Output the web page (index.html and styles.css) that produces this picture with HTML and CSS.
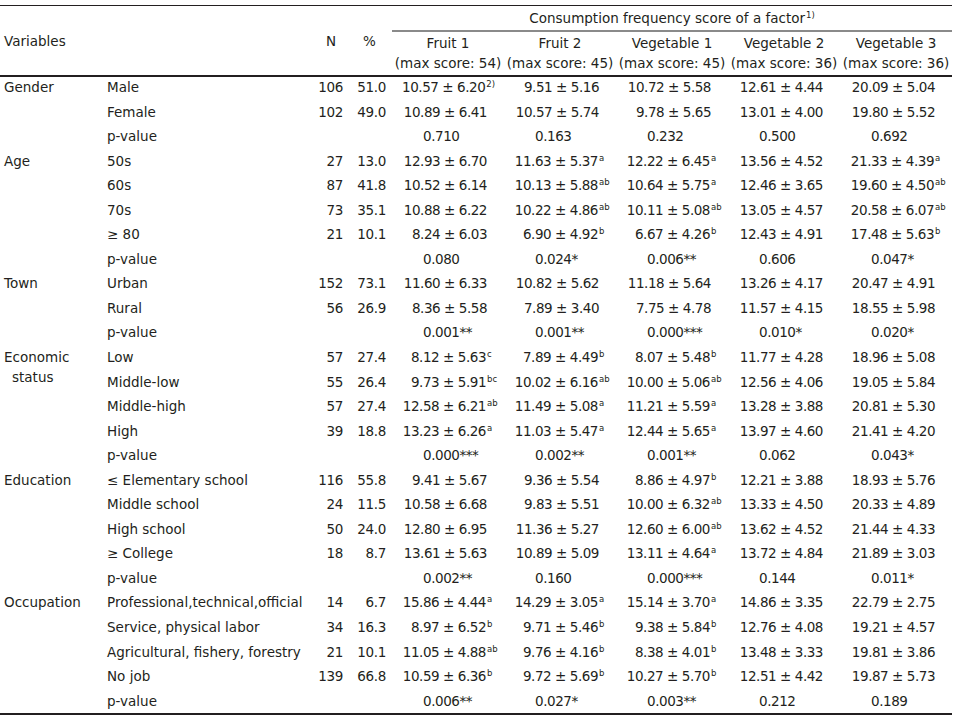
FILE: index.html
```html
<!DOCTYPE html>
<html>
<head>
<meta charset="utf-8">
<link rel="stylesheet" href="styles.css">
</head>
<body>
<table class="t">
<colgroup>
<col class="c-var"><col class="c-sub"><col class="c-n"><col class="c-pct"><col class="c-d"><col class="c-d"><col class="c-d"><col class="c-d"><col class="c-d">
</colgroup>
<thead>
<tr>
<th class="h-var" rowspan="2" colspan="2">Variables</th>
<th class="h-n" rowspan="2">N</th>
<th class="h-pct" rowspan="2">%</th>
<th class="h-top" colspan="5">Consumption frequency score of a factor<span class="hs">1)</span></th>
</tr>
<tr>
<th class="h-col">Fruit 1<br>(max score: 54)</th>
<th class="h-col">Fruit 2<br>(max score: 45)</th>
<th class="h-col">Vegetable 1<br>(max score: 45)</th>
<th class="h-col">Vegetable 2<br>(max score: 36)</th>
<th class="h-col">Vegetable 3<br>(max score: 36)</th>
</tr>
</thead>
<tbody>
<tr><td class="g" rowspan="3">Gender</td><td class="s">Male</td><td class="n">106</td><td class="pc">51.0</td><td class="v">10.57 ± 6.20<span class="fs">2)</span></td><td class="v">9.51 ± 5.16</td><td class="v">10.72 ± 5.58</td><td class="v">12.61 ± 4.44</td><td class="v">20.09 ± 5.04</td></tr>
<tr><td class="s">Female</td><td class="n">102</td><td class="pc">49.0</td><td class="v">10.89 ± 6.41</td><td class="v">10.57 ± 5.74</td><td class="v">9.78 ± 5.65</td><td class="v">13.01 ± 4.00</td><td class="v">19.80 ± 5.52</td></tr>
<tr><td class="s">p-value</td><td class="n"></td><td class="pc"></td><td class="p">0.710</td><td class="p">0.163</td><td class="p">0.232</td><td class="p">0.500</td><td class="p">0.692</td></tr>

<tr><td class="g" rowspan="5">Age</td><td class="s">50s</td><td class="n">27</td><td class="pc">13.0</td><td class="v">12.93 ± 6.70</td><td class="v">11.63 ± 5.37<span class="sp">a</span></td><td class="v">12.22 ± 6.45<span class="sp">a</span></td><td class="v">13.56 ± 4.52</td><td class="v">21.33 ± 4.39<span class="sp">a</span></td></tr>
<tr><td class="s">60s</td><td class="n">87</td><td class="pc">41.8</td><td class="v">10.52 ± 6.14</td><td class="v">10.13 ± 5.88<span class="sp">ab</span></td><td class="v">10.64 ± 5.75<span class="sp">a</span></td><td class="v">12.46 ± 3.65</td><td class="v">19.60 ± 4.50<span class="sp">ab</span></td></tr>
<tr><td class="s">70s</td><td class="n">73</td><td class="pc">35.1</td><td class="v">10.88 ± 6.22</td><td class="v">10.22 ± 4.86<span class="sp">ab</span></td><td class="v">10.11 ± 5.08<span class="sp">ab</span></td><td class="v">13.05 ± 4.57</td><td class="v">20.58 ± 6.07<span class="sp">ab</span></td></tr>
<tr><td class="s">≥ 80</td><td class="n">21</td><td class="pc">10.1</td><td class="v">8.24 ± 6.03</td><td class="v">6.90 ± 4.92<span class="sp">b</span></td><td class="v">6.67 ± 4.26<span class="sp">b</span></td><td class="v">12.43 ± 4.91</td><td class="v">17.48 ± 5.63<span class="sp">b</span></td></tr>
<tr><td class="s">p-value</td><td class="n"></td><td class="pc"></td><td class="p">0.080</td><td class="p">0.024*</td><td class="p">0.006**</td><td class="p">0.606</td><td class="p">0.047*</td></tr>

<tr><td class="g" rowspan="3">Town</td><td class="s">Urban</td><td class="n">152</td><td class="pc">73.1</td><td class="v">11.60 ± 6.33</td><td class="v">10.82 ± 5.62</td><td class="v">11.18 ± 5.64</td><td class="v">13.26 ± 4.17</td><td class="v">20.47 ± 4.91</td></tr>
<tr><td class="s">Rural</td><td class="n">56</td><td class="pc">26.9</td><td class="v">8.36 ± 5.58</td><td class="v">7.89 ± 3.40</td><td class="v">7.75 ± 4.78</td><td class="v">11.57 ± 4.15</td><td class="v">18.55 ± 5.98</td></tr>
<tr><td class="s">p-value</td><td class="n"></td><td class="pc"></td><td class="p">0.001**</td><td class="p">0.001**</td><td class="p">0.000***</td><td class="p">0.010*</td><td class="p">0.020*</td></tr>

<tr><td class="g" rowspan="5">Economic<br><span class="ind">status</span></td><td class="s">Low</td><td class="n">57</td><td class="pc">27.4</td><td class="v">8.12 ± 5.63<span class="sp">c</span></td><td class="v">7.89 ± 4.49<span class="sp">b</span></td><td class="v">8.07 ± 5.48<span class="sp">b</span></td><td class="v">11.77 ± 4.28</td><td class="v">18.96 ± 5.08</td></tr>
<tr><td class="s">Middle-low</td><td class="n">55</td><td class="pc">26.4</td><td class="v">9.73 ± 5.91<span class="sp">bc</span></td><td class="v">10.02 ± 6.16<span class="sp">ab</span></td><td class="v">10.00 ± 5.06<span class="sp">ab</span></td><td class="v">12.56 ± 4.06</td><td class="v">19.05 ± 5.84</td></tr>
<tr><td class="s">Middle-high</td><td class="n">57</td><td class="pc">27.4</td><td class="v">12.58 ± 6.21<span class="sp">ab</span></td><td class="v">11.49 ± 5.08<span class="sp">a</span></td><td class="v">11.21 ± 5.59<span class="sp">a</span></td><td class="v">13.28 ± 3.88</td><td class="v">20.81 ± 5.30</td></tr>
<tr><td class="s">High</td><td class="n">39</td><td class="pc">18.8</td><td class="v">13.23 ± 6.26<span class="sp">a</span></td><td class="v">11.03 ± 5.47<span class="sp">a</span></td><td class="v">12.44 ± 5.65<span class="sp">a</span></td><td class="v">13.97 ± 4.60</td><td class="v">21.41 ± 4.20</td></tr>
<tr><td class="s">p-value</td><td class="n"></td><td class="pc"></td><td class="p">0.000***</td><td class="p">0.002**</td><td class="p">0.001**</td><td class="p">0.062</td><td class="p">0.043*</td></tr>

<tr><td class="g" rowspan="5">Education</td><td class="s">≤ Elementary school</td><td class="n">116</td><td class="pc">55.8</td><td class="v">9.41 ± 5.67</td><td class="v">9.36 ± 5.54</td><td class="v">8.86 ± 4.97<span class="sp">b</span></td><td class="v">12.21 ± 3.88</td><td class="v">18.93 ± 5.76</td></tr>
<tr><td class="s">Middle school</td><td class="n">24</td><td class="pc">11.5</td><td class="v">10.58 ± 6.68</td><td class="v">9.83 ± 5.51</td><td class="v">10.00 ± 6.32<span class="sp">ab</span></td><td class="v">13.33 ± 4.50</td><td class="v">20.33 ± 4.89</td></tr>
<tr><td class="s">High school</td><td class="n">50</td><td class="pc">24.0</td><td class="v">12.80 ± 6.95</td><td class="v">11.36 ± 5.27</td><td class="v">12.60 ± 6.00<span class="sp">ab</span></td><td class="v">13.62 ± 4.52</td><td class="v">21.44 ± 4.33</td></tr>
<tr><td class="s">≥ College</td><td class="n">18</td><td class="pc">8.7</td><td class="v">13.61 ± 5.63</td><td class="v">10.89 ± 5.09</td><td class="v">13.11 ± 4.64<span class="sp">a</span></td><td class="v">13.72 ± 4.84</td><td class="v">21.89 ± 3.03</td></tr>
<tr><td class="s">p-value</td><td class="n"></td><td class="pc"></td><td class="p">0.002**</td><td class="p">0.160</td><td class="p">0.000***</td><td class="p">0.144</td><td class="p">0.011*</td></tr>

<tr><td class="g" rowspan="5">Occupation</td><td class="s">Professional,technical,official</td><td class="n">14</td><td class="pc">6.7</td><td class="v">15.86 ± 4.44<span class="sp">a</span></td><td class="v">14.29 ± 3.05<span class="sp">a</span></td><td class="v">15.14 ± 3.70<span class="sp">a</span></td><td class="v">14.86 ± 3.35</td><td class="v">22.79 ± 2.75</td></tr>
<tr><td class="s">Service, physical labor</td><td class="n">34</td><td class="pc">16.3</td><td class="v">8.97 ± 6.52<span class="sp">b</span></td><td class="v">9.71 ± 5.46<span class="sp">b</span></td><td class="v">9.38 ± 5.84<span class="sp">b</span></td><td class="v">12.76 ± 4.08</td><td class="v">19.21 ± 4.57</td></tr>
<tr><td class="s">Agricultural, fishery, forestry</td><td class="n">21</td><td class="pc">10.1</td><td class="v">11.05 ± 4.88<span class="sp">ab</span></td><td class="v">9.76 ± 4.16<span class="sp">b</span></td><td class="v">8.38 ± 4.01<span class="sp">b</span></td><td class="v">13.48 ± 3.33</td><td class="v">19.81 ± 3.86</td></tr>
<tr><td class="s">No job</td><td class="n">139</td><td class="pc">66.8</td><td class="v">10.59 ± 6.36<span class="sp">b</span></td><td class="v">9.72 ± 5.69<span class="sp">b</span></td><td class="v">10.27 ± 5.70<span class="sp">b</span></td><td class="v">12.51 ± 4.42</td><td class="v">19.87 ± 5.73</td></tr>
<tr class="last"><td class="s">p-value</td><td class="n"></td><td class="pc"></td><td class="p">0.006**</td><td class="p">0.027*</td><td class="p">0.003**</td><td class="p">0.212</td><td class="p">0.189</td></tr>
</tbody>
</table>
</body>
</html>
```

FILE: styles.css
```css
html, body {
  margin: 0;
  padding: 0;
  background: #ffffff;
}

body {
  font-family: "DejaVu Sans", "Liberation Sans", sans-serif;
  font-size: 13.5px;
  color: #231f20;
}

.t {
  margin-top: 5px;
  width: 952px;
  table-layout: fixed;
  border-collapse: separate;
  border-spacing: 0;
  border-top: 1px solid #231f20;
  border-bottom: 2px solid #231f20;
}

.c-var { width: 103px; }
.c-sub { width: 207px; }
.c-n { width: 42px; }
.c-pct { width: 40px; }
.c-d { width: 112px; }

th {
  font-weight: normal;
  line-height: 20px;
  white-space: nowrap;
}

.h-var {
  text-align: left;
  padding: 0 0 0 4px;
  vertical-align: middle;
  border-bottom: 2px solid #231f20;
}

.h-n {
  text-align: center;
  vertical-align: middle;
  border-bottom: 2px solid #231f20;
}

.h-pct {
  text-align: center;
  padding-right: 6px;
  vertical-align: middle;
  border-bottom: 2px solid #231f20;
}

.h-top {
  text-align: center;
  padding: 2px 0;
  border-bottom: 2px solid #8a8a8a;
}

.h-col {
  text-align: center;
  padding: 1px 0 2px;
  border-bottom: 2px solid #231f20;
}

.hs {
  font-size: 8.5px;
  vertical-align: 5px;
  line-height: 1;
  margin-left: 1px;
}

td {
  padding: 0 0 4.56px;
  line-height: 20px;
  white-space: nowrap;
  vertical-align: top;
}

.last td {
  padding-bottom: 2px;
}

.g {
  padding-left: 4px;
}

.ind {
  display: inline-block;
  padding-left: 8px;
}

.s {
  padding-left: 4px;
}

.n {
  text-align: right;
  padding-right: 9px;
  letter-spacing: -0.3px;
}

.pc {
  text-align: right;
  padding-right: 6px;
  letter-spacing: -0.3px;
}

.v {
  text-align: right;
  padding-right: 17px;
  letter-spacing: -0.45px;
}

.p {
  text-align: left;
  padding-left: 31px;
  letter-spacing: -0.45px;
}

.sp {
  display: inline-block;
  width: 0;
  font-size: 8.5px;
  line-height: 1;
  vertical-align: 5px;
  letter-spacing: 0;
  padding-left: 1px;
  overflow: visible;
}

.fs {
  font-size: 8.5px;
  line-height: 1;
  vertical-align: 5px;
  letter-spacing: 0;
  margin-left: 1px;
  margin-right: -8px;
}
```
